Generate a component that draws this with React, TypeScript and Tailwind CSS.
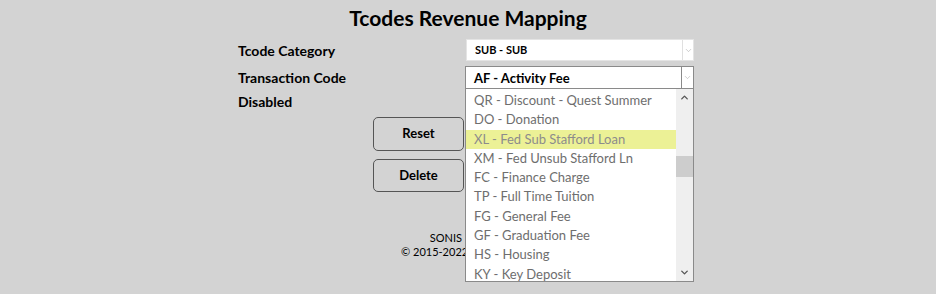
import { ChevronDown, ChevronUp } from "lucide-react";

const items = [
  "QR - Discount - Quest Summer",
  "DO - Donation",
  "XL - Fed Sub Stafford Loan",
  "XM - Fed Unsub Stafford Ln",
  "FC - Finance Charge",
  "TP - Full Time Tuition",
  "FG - General Fee",
  "GF - Graduation Fee",
  "HS - Housing",
  "KY - Key Deposit",
];

export default function App() {
  return (
    <div className="relative h-[294px] w-[936px] overflow-hidden bg-[#d3d3d3] text-black" style={{ fontFamily: "Lato, 'Open Sans', sans-serif" }}>
      <h1 className="pt-[5px] text-center text-[21px] font-bold leading-[26px]">Tcodes Revenue Mapping</h1>

      <div className="ml-[238px] mt-[8px] flex w-[456px] flex-col">
        <div className="flex h-[22px] items-center justify-between">
          <span className="text-[14px] font-bold">Tcode Category</span>
          <div className="flex h-[22px] w-[228px] items-center border border-[#e4e4e4] bg-white">
            <span className="flex-1 pl-[8px] text-[11px] font-bold">SUB - SUB</span>
            <span className="flex h-full w-[11px] items-center justify-center border-l border-[#e0e0e0]">
              <ChevronDown size={9} strokeWidth={1.5} className="text-[#aaa]" />
            </span>
          </div>
        </div>
        <div className="mt-[5px] flex h-[23px] items-center justify-between">
          <span className="text-[14px] font-bold">Transaction Code</span>
          <div className="flex h-[23px] w-[229px] items-center border border-[#8a8a8a] bg-white">
            <span className="flex-1 pl-[8px] pt-[2px] text-[13px] font-bold">AF - Activity Fee</span>
            <span className="flex h-full w-[12px] items-center justify-center border-l border-[#8a8a8a]">
              <ChevronDown size={9} strokeWidth={1.5} className="text-[#aaa]" />
            </span>
          </div>
        </div>
        <div className="mt-[3px] text-[14px] font-bold leading-[20px]">Disabled</div>
      </div>

      <div className="ml-[373px] mt-[5px] flex w-[91px] flex-col gap-[8px]">
        <button className="h-[34px] rounded-[5px] border border-[#555] text-[13px] font-bold">Reset</button>
        <button className="h-[33px] rounded-[5px] border border-[#555] text-[13px] font-bold">Delete</button>
      </div>

      <div className="mt-[39px] text-center text-[11px] leading-[14px]">
        <div>SONIS Ultimate</div>
        <div>© 2015-2022 Jenzabar, Inc.</div>
      </div>

      <div className="absolute left-[465px] top-[89px] flex h-[193px] w-[229px] overflow-hidden border border-t-0 border-[#8a8a8a] bg-white">
        <ul className="flex-1 pt-[2px]">
          {items.map((it, i) => (
            <li
              key={it}
              className={
                i === 2
                  ? "h-[19.3px] bg-[#ecf196] pl-[8px] text-[13px] leading-[19px] text-[#8c8c8c]"
                  : "h-[19.3px] pl-[8px] text-[13px] leading-[19px] text-[#6e6e6e]"
              }
            >
              {it}
            </li>
          ))}
        </ul>
        <div className="flex w-[17px] flex-col bg-[#efefef]">
          <div className="flex h-[17px] items-center justify-center">
            <ChevronUp size={11} strokeWidth={3} className="text-[#555]" />
          </div>
          <div className="mt-[50px] h-[21px] bg-[#cdcdcd]" />
          <div className="flex-1" />
          <div className="flex h-[17px] items-center justify-center">
            <ChevronDown size={11} strokeWidth={3} className="text-[#555]" />
          </div>
        </div>
      </div>
    </div>
  );
}
